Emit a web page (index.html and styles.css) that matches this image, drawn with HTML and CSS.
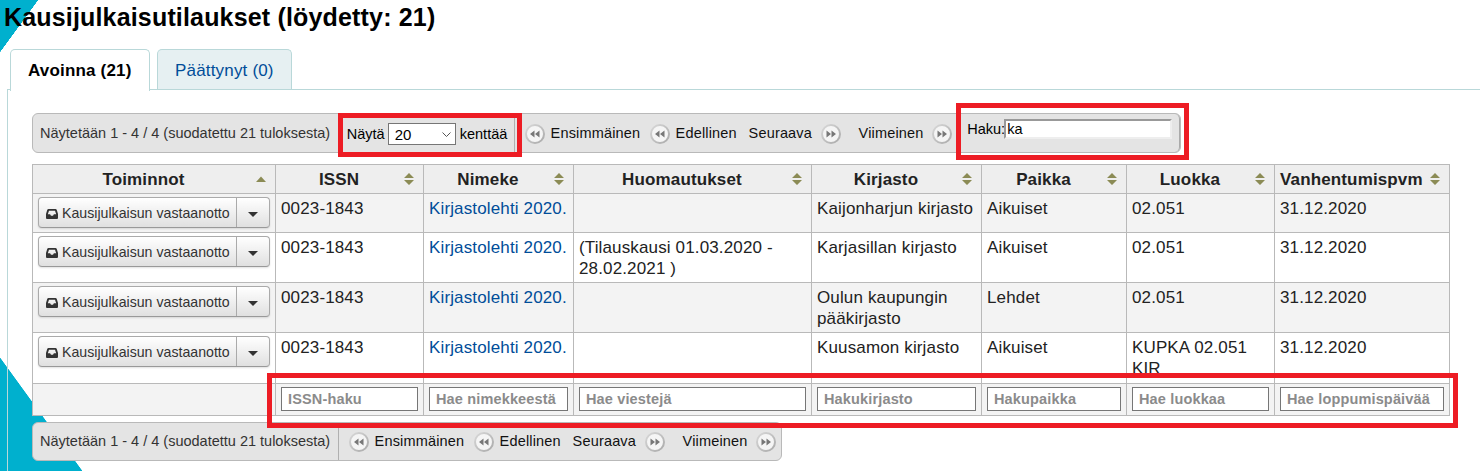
FILE: index.html
```html
<!DOCTYPE html>
<html lang="fi">
<head>
<meta charset="utf-8">
<title>Kausijulkaisutilaukset</title>
<link rel="stylesheet" href="styles.css">
</head>
<body>
<svg class="symbols" width="0" height="0">
  <defs>
    <linearGradient id="ring" x1="0" y1="0" x2="1" y2="1"><stop offset="0" stop-color="#d8d8d8"/><stop offset="1" stop-color="#aaa"/></linearGradient>
    <symbol id="prev" viewBox="0 0 20 20"><circle cx="10" cy="10" r="9" fill="#f5f5f5" stroke="url(#ring)" stroke-width="2"/><path d="M9.500 6.500v7L5 10zM14.500 6.500v7L10 10z" fill="#777"/></symbol>
    <symbol id="next" viewBox="0 0 20 20"><circle cx="10" cy="10" r="9" fill="#f5f5f5" stroke="url(#ring)" stroke-width="2"/><path d="M5.500 6.500v7L10 10zM10.500 6.500v7L15 10z" fill="#777"/></symbol>
    <symbol id="tray" viewBox="0 0 12 10"><path fill-rule="evenodd" d="M2.500 0h7Q10.400 0 10.800 1L12 5v4q0 1-1 1H1q-1 0-1-1V5l1.200-4Q1.600 0 2.500 0zM3 1.700L1.800 5.300h2.300l.9 1.500h2l.9-1.500h2.300L9 1.700z" fill="#333"/></symbol>
    <symbol id="sort" viewBox="0 0 10 12"><path d="M0 5l5-5 5 5zM0 7h10l-5 5z" fill="#8b8b55"/></symbol>
    <symbol id="asc" viewBox="0 0 10 12"><path d="M0 9l5-5.500 5 5.500z" fill="#8b8b55"/></symbol>
  </defs>
</svg>
<main class="page">
  <h1 class="title">Kausijulkaisutilaukset (löydetty: 21)</h1>
  <nav class="tabs">
    <a class="tab active">Avoinna (21)</a>
    <a class="tab">Päättynyt (0)</a>
  </nav>
  <section class="panel">
    <div class="toolbar top">
      <div class="info">Näytetään 1 - 4 / 4 (suodatettu 21 tuloksesta)</div>
      <div class="length"><span class="show">Näytä</span><div class="select">20<svg width="9" height="5" viewBox="0 0 9 5"><path d="M.5.5l4 4 4-4" fill="none" stroke="#555"/></svg></div><span>kenttää</span></div>
      <div class="pager">
        <svg class="ico"><use href="#prev"/></svg><span class="first">Ensimmäinen</span>
        <svg class="ico"><use href="#prev"/></svg><span class="previous">Edellinen</span>
        <span class="following">Seuraava</span><svg class="ico"><use href="#next"/></svg>
        <span class="last">Viimeinen</span><svg class="ico"><use href="#next"/></svg>
      </div>
      <div class="search"><span>Haku:</span><input class="query" value="ka"></div>
    </div>
    <table class="grid">
      <colgroup><col class="c1"><col class="c2"><col class="c3"><col class="c4"><col class="c5"><col class="c6"><col class="c7"><col class="c8"></colgroup>
      <thead><tr>
        <th><div class="head"><span>Toiminnot</span><svg class="sort"><use href="#asc"/></svg></div></th>
        <th><div class="head"><span>ISSN</span><svg class="sort"><use href="#sort"/></svg></div></th>
        <th><div class="head"><span>Nimeke</span><svg class="sort"><use href="#sort"/></svg></div></th>
        <th><div class="head"><span>Huomautukset</span><svg class="sort"><use href="#sort"/></svg></div></th>
        <th><div class="head"><span>Kirjasto</span><svg class="sort"><use href="#sort"/></svg></div></th>
        <th><div class="head"><span>Paikka</span><svg class="sort"><use href="#sort"/></svg></div></th>
        <th><div class="head"><span>Luokka</span><svg class="sort"><use href="#sort"/></svg></div></th>
        <th><div class="head wide"><span>Vanhentumispvm</span><svg class="sort"><use href="#sort"/></svg></div></th>
      </tr></thead>
      <tbody>
        <tr class="r1 odd"><td class="act"><div class="btn"><span class="main"><svg class="tray"><use href="#tray"/></svg><span>Kausijulkaisun vastaanotto</span></span><span class="more"><i class="caret"></i></span></div></td><td>0023-1843</td><td><a class="link">Kirjastolehti 2020.</a></td><td></td><td>Kaijonharjun kirjasto</td><td>Aikuiset</td><td>02.051</td><td>31.12.2020</td></tr>
        <tr class="r2"><td class="act"><div class="btn"><span class="main"><svg class="tray"><use href="#tray"/></svg><span>Kausijulkaisun vastaanotto</span></span><span class="more"><i class="caret"></i></span></div></td><td>0023-1843</td><td><a class="link">Kirjastolehti 2020.</a></td><td>(Tilauskausi 01.03.2020 -<br>28.02.2021 )</td><td>Karjasillan kirjasto</td><td>Aikuiset</td><td>02.051</td><td>31.12.2020</td></tr>
        <tr class="r2 odd"><td class="act"><div class="btn"><span class="main"><svg class="tray"><use href="#tray"/></svg><span>Kausijulkaisun vastaanotto</span></span><span class="more"><i class="caret"></i></span></div></td><td>0023-1843</td><td><a class="link">Kirjastolehti 2020.</a></td><td></td><td>Oulun kaupungin<br>pääkirjasto</td><td>Lehdet</td><td>02.051</td><td>31.12.2020</td></tr>
        <tr class="r4"><td class="act"><div class="btn"><span class="main"><svg class="tray"><use href="#tray"/></svg><span>Kausijulkaisun vastaanotto</span></span><span class="more"><i class="caret"></i></span></div></td><td>0023-1843</td><td><a class="link">Kirjastolehti 2020.</a></td><td></td><td>Kuusamon kirjasto</td><td>Aikuiset</td><td>KUPKA 02.051<br>KIR</td><td>31.12.2020</td></tr>
      </tbody>
      <tfoot><tr class="odd">
        <td></td>
        <td><input class="filter" placeholder="ISSN-haku"></td>
        <td><input class="filter" placeholder="Hae nimekkeestä"></td>
        <td><input class="filter" placeholder="Hae viestejä"></td>
        <td><input class="filter" placeholder="Hakukirjasto"></td>
        <td><input class="filter" placeholder="Hakupaikka"></td>
        <td><input class="filter" placeholder="Hae luokkaa"></td>
        <td><input class="filter" placeholder="Hae loppumispäivää"></td>
      </tr></tfoot>
    </table>
    <div class="toolbar bottom">
      <div class="info">Näytetään 1 - 4 / 4 (suodatettu 21 tuloksesta)</div>
      <div class="pager">
        <svg class="ico"><use href="#prev"/></svg><span class="first">Ensimmäinen</span>
        <svg class="ico"><use href="#prev"/></svg><span class="previous">Edellinen</span>
        <span class="following">Seuraava</span><svg class="ico"><use href="#next"/></svg>
        <span class="last">Viimeinen</span><svg class="ico"><use href="#next"/></svg>
      </div>
    </div>
  </section>
</main>
<div class="mark mark-length"></div>
<div class="mark mark-search"></div>
<div class="mark mark-filters"></div>
</body>
</html>
```
FILE: styles.css
```css
* { box-sizing: border-box; }
body { margin: 0; width: 1480px; height: 471px; overflow: hidden; position: relative; background: #fff; font-family: "Liberation Sans", Arial, sans-serif; color: #222; }
.symbols { position: absolute; }
.page { height: 471px; display: flex; flex-direction: column; background: linear-gradient(to bottom right, #00b0ce 50%, transparent 50.5%) 0 0 / 38px 52px no-repeat, linear-gradient(to top right, #00b0ce 50%, transparent 50.5%) 0 358px / 82px 113px no-repeat; }
.title { margin: 0; height: 49px; padding: 3px 0 0 4px; font-size: 25px; line-height: 29px; letter-spacing: .17px; color: #000; white-space: nowrap; }
.tabs { display: flex; gap: 7px; height: 40px; padding-left: 10px; flex: none; }
.tab { height: 40px; border: 1px solid #b9d8d9; border-bottom: 0; border-radius: 5px 5px 0 0; background: #e6f0f2; color: #004d99; font-size: 17px; letter-spacing: .18px; line-height: 41px; padding-left: 17px; width: 135px; white-space: nowrap; }
.tab.active { height: 42px; width: 140px; background: #fff; color: #000; font-weight: bold; position: relative; z-index: 1; }
.panel { margin-left: 7px; border-left: 1px solid #b9d8d9; border-top: 1px solid #b9d8d9; padding: 23px 0 0 24px; flex: 1; }
.toolbar { display: flex; border: 1px solid #b9b9b9; border-radius: 6px; background: #e4e4e4; font-size: 14.5px; color: #111; white-space: nowrap; }
.toolbar.top { width: 1149px; height: 40px; }
.toolbar.bottom { width: 750px; height: 39px; margin-top: 6px; }
.info { width: 306px; padding-left: 7px; line-height: 38px; color: #333; }
.bottom .info { line-height: 37px; border-right: 1px solid #b0b0b0; }
.length { display: flex; align-items: center; width: 176px; padding: 2px 0 0 8px; color: #000; border-right: 1px solid #b0b0b0; }
.show { width: 41px; }
.select { display: flex; align-items: center; justify-content: space-between; width: 68px; height: 22px; margin-right: 4px; padding: 0 4px 0 6px; background: #fff; border: 1px solid #767676; font-size: 15px; }
.pager { display: flex; align-items: center; padding-left: 10px; width: 443px; letter-spacing: .17px; }
.bottom .pager { padding-bottom: 1px; }
.ico { width: 20px; height: 20px; flex: none; margin-top: 1px; }
.first { width: 99px; margin-left: 6px; }
.previous { width: 73px; margin-left: 6px; }
.following { width: 72px; }
.last { width: 73px; margin-left: 18px; }
.search { display: flex; align-items: flex-start; width: 224px; padding: 5px 0 0 11px; margin-left: -1px; border-right: 1px solid #aaa; border-radius: 5px; line-height: 20px; color: #000; }
.search span { width: 37px; }
.query { width: 168px; height: 20px; padding: 0 1px; border: 2px solid; border-color: #999 #eee #eee #999; border-radius: 0; background: #fff; font: 14.5px "Liberation Sans", Arial, sans-serif; color: #000; }
.grid { table-layout: fixed; border-collapse: collapse; width: 1418px; margin-top: 11px; font-size: 17px; line-height: 21px; letter-spacing: .14px; background: #fff; }
.c1 { width: 243px; } .c2 { width: 148px; } .c3 { width: 150px; } .c4 { width: 238px; }
.c5 { width: 170px; } .c6 { width: 145px; } .c7 { width: 148px; } .c8 { width: 175px; }
th, td { border: 1px solid #b9b9b9; padding: 4px 0 0 5px; vertical-align: top; text-align: left; white-space: nowrap; }
th { height: 29px; padding: 0; background: #eee; }
.head { display: flex; align-items: center; height: 28px; padding-right: 9px; text-align: center; }
.head span { flex: 1; }
.head.wide { padding-left: 5px; text-align: left; }
.sort { width: 10px; height: 12px; flex: none; margin-left: 2px; }
.r1 { height: 39px; }
.r2 { height: 50px; }
.r4 { height: 51px; }
.odd { background: #f3f3f3; }
.link { color: #004d99; }
.act { padding: 3px 0 0 5px; }
.btn { display: flex; width: 232px; height: 31px; border: 1px solid #aaa; border-bottom-color: #999; border-radius: 4px; background: linear-gradient(#fff, #e0e0e0); box-shadow: 0 1px 2px rgba(0,0,0,.12); font-size: 14.17px; letter-spacing: 0; color: #333; }
.main { display: flex; align-items: center; width: 198px; padding: 2px 0 0 7px; border-right: 1px solid #aaa; }
.tray { width: 12px; height: 10px; margin-right: 4px; }
.more { display: flex; flex: 1; align-items: center; justify-content: center; }
.caret { border: 5px solid transparent; border-top-color: #333; border-bottom: 0; margin-top: 3px; }
tfoot td { height: 32px; padding: 3px 5px 0; line-height: 0; }
.filter { width: 100%; height: 24px; padding: 0 6px; border: 1px solid #767676; background: #fff; font: bold 14.5px "Liberation Sans", Arial, sans-serif; letter-spacing: .15px; }
.filter::placeholder { color: #8b8b8b; opacity: 1; }
.mark { position: absolute; border: 5px solid #ed1c24; z-index: 2; }
.mark-length { left: 338px; top: 113px; width: 184px; height: 44px; }
.mark-search { left: 956px; top: 103px; width: 233px; height: 57px; }
.mark-filters { left: 267px; top: 373px; width: 1191px; height: 55px; }
```
